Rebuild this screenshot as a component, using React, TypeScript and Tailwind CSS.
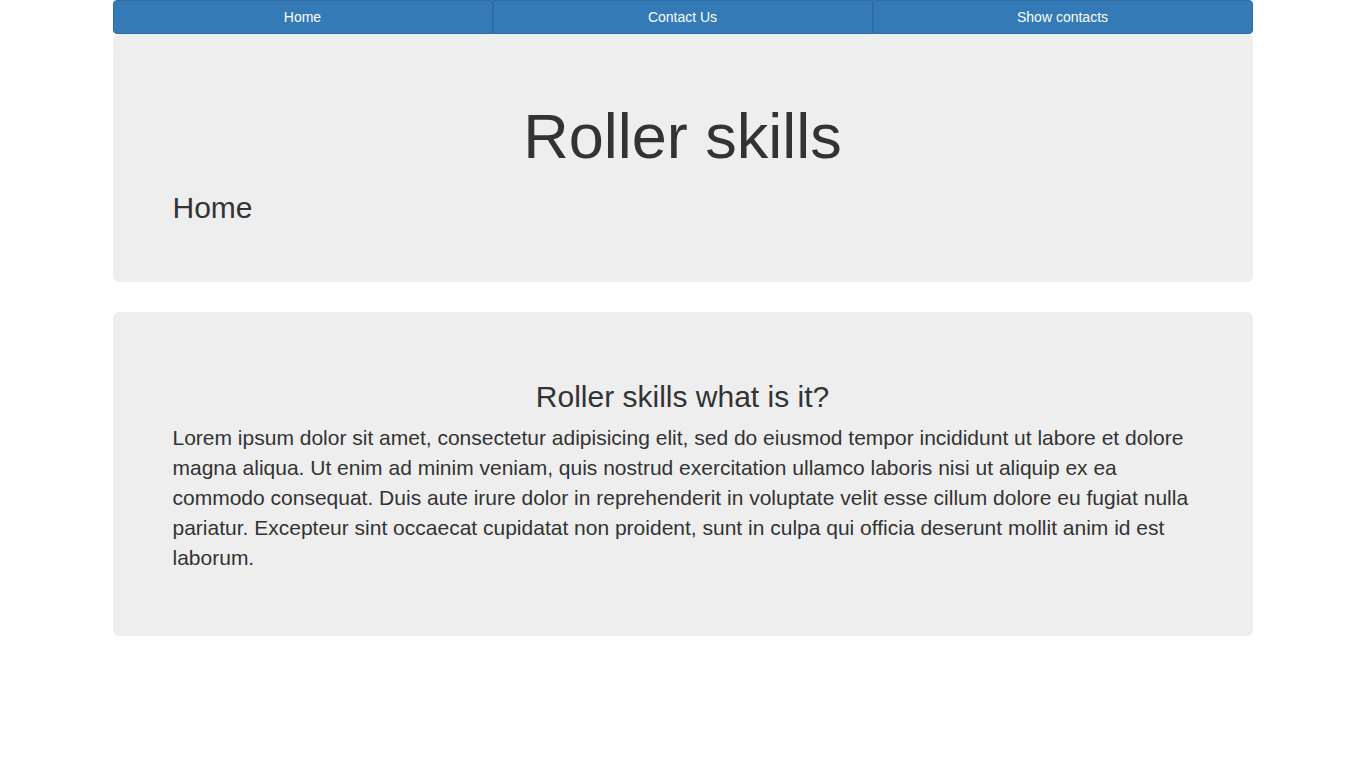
import React from 'react';

const navItems = ['Home', 'Contact Us', 'Show contacts'];

const lorem =
  'Lorem ipsum dolor sit amet, consectetur adipisicing elit, sed do eiusmod tempor incididunt ut labore et dolore magna aliqua. Ut enim ad minim veniam, quis nostrud exercitation ullamco laboris nisi ut aliquip ex ea commodo consequat. Duis aute irure dolor in reprehenderit in voluptate velit esse cillum dolore eu fugiat nulla pariatur. Excepteur sint occaecat cupidatat non proident, sunt in culpa qui officia deserunt mollit anim id est laborum.';

const App: React.FC = () => {
  return (
    <div className="min-h-screen bg-white text-[#333] font-['Liberation_Sans',Arial,sans-serif]">
      <div className="mx-auto w-[1170px] px-[15px]">
        {/* nav buttons */}
        <div className="grid grid-cols-3">
          {navItems.map((item, i) => (
            <button
              key={item}
              className={`h-[34px] border border-[#2e6da4] bg-[#337ab7] px-3 text-[14px] leading-5 text-white ${
                i === 0 ? 'rounded-l' : ''
              } ${i === navItems.length - 1 ? 'rounded-r' : ''}`}
            >
              {item}
            </button>
          ))}
        </div>

        {/* header */}
        <div className="mb-[30px] rounded-md bg-[#eee] px-[60px] py-[48px]">
          <h1 className="mt-5 mb-2.5 text-center text-[63px] leading-[1.1] font-normal">
            Roller skills
          </h1>
          <h2 className="mt-5 mb-2.5 text-[30px] leading-[1.1] font-normal">Home</h2>
        </div>

        {/* content */}
        <div className="mb-[30px] rounded-md bg-[#eee] px-[60px] pt-[68px] pb-[48px]">
          <h2 className="mb-2.5 text-center text-[30px] leading-[1.1] font-normal">
            Roller skills what is it?
          </h2>
          <p className="mb-[15px] text-[21px] leading-[30px]">{lorem}</p>
        </div>
      </div>
    </div>
  );
};

export default App;
